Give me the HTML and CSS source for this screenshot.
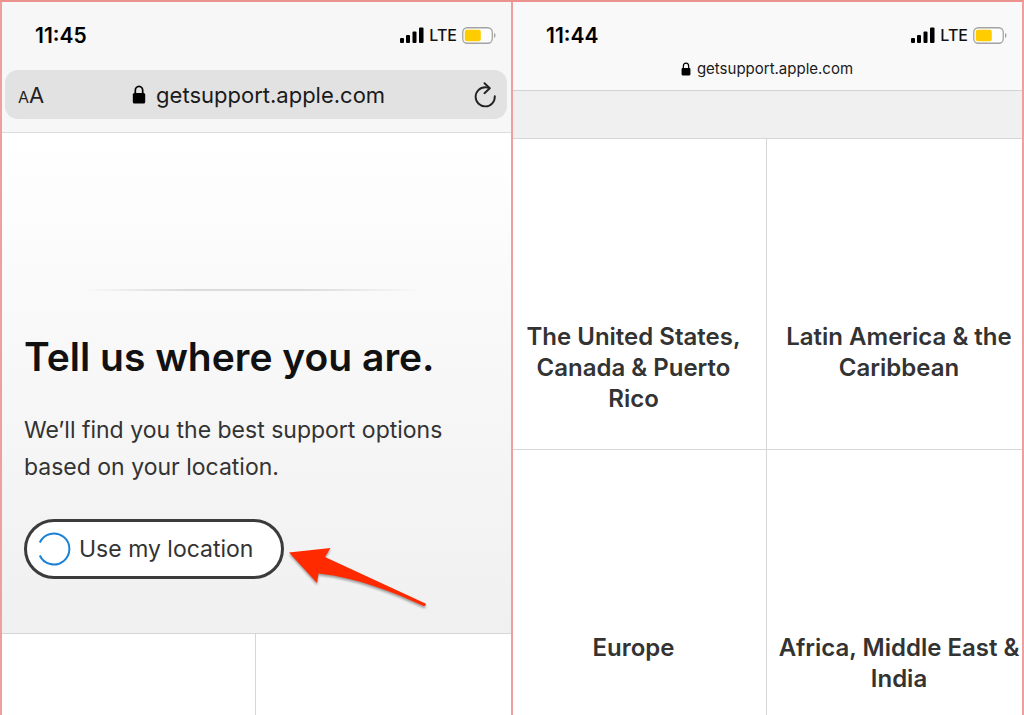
FILE: index.html
```html
<!DOCTYPE html>
<html lang="en">
<head>
<meta charset="utf-8">
<meta name="viewport" content="width=device-width, initial-scale=1">
<title>Get Support</title>
<link rel="stylesheet" href="styles.css">
</head>
<body>
<svg class="defs" aria-hidden="true">
  <symbol id="signal" viewBox="0 0 24 16">
    <rect x="0" y="11" width="4" height="5" rx="1"/>
    <rect x="6" y="8" width="4" height="8" rx="1"/>
    <rect x="12.500" y="4.500" width="4" height="11.500" rx="1"/>
    <rect x="19" y="0.500" width="4.500" height="15.500" rx="1"/>
  </symbol>
  <symbol id="battery" viewBox="0 0 34 17">
    <rect x="0.750" y="0.750" width="29.500" height="15.500" rx="4.500" fill="#fcfcfc" stroke="#a3a3a3" stroke-width="1.300"/>
    <rect x="2.800" y="2.800" width="16" height="11.400" rx="2" fill="#ffcc00"/>
    <path d="M32 6v5c2-.8 2-4.200 0-5z" fill="#a3a3a3"/>
  </symbol>
  <symbol id="lock" viewBox="0 0 14 19">
    <path d="M3.300 9V5.500a3.700 4.200 0 0 1 7.400 0V9" fill="none" stroke="currentColor" stroke-width="1.700"/>
    <rect x="0.800" y="8" width="12.400" height="10.500" rx="1.600"/>
  </symbol>
</svg>
<main class="screens">
  <section class="phone">
    <header class="browser">
      <div class="status">
        <time class="clock">11:45</time>
        <div class="indicators">
          <svg class="signal"><use href="#signal"/></svg>
          <span class="carrier">LTE</span>
          <svg class="battery"><use href="#battery"/></svg>
        </div>
      </div>
      <div class="address">
        <button class="text-size" type="button" aria-label="Text size"><span class="small-a">A</span>A</button>
        <div class="site"><svg class="lock"><use href="#lock"/></svg>getsupport.apple.com</div>
        <button class="reload" type="button" aria-label="Reload">
          <svg viewBox="0 0 24 26" width="24" height="26" fill="none" stroke="#222" stroke-width="1.900" stroke-linecap="round" stroke-linejoin="round">
            <path d="M21.800 14.300A9.600 9.600 0 1 1 12.200 5.200L16.300 6.200"/>
            <path d="M11.500 1.200l5.300 5-5.300 5"/>
          </svg>
        </button>
      </div>
    </header>
    <div class="hero">
      <div class="rule"></div>
      <h1 class="title">Tell us where you are.</h1>
      <p class="lead">We’ll find you the best support options based on your location.</p>
      <div class="action">
        <button class="locate" type="button">
          <svg class="spinner" viewBox="0 0 34 34" fill="none" stroke="#1b82d6" stroke-width="2"><path d="M2.800 10.500A15.500 15.500 0 1 1 2.800 23.500"/></svg>
          Use my location
        </button>
        <svg class="arrow" viewBox="0 0 140 62" fill="#ff2a00"><path d="M1 5.500L42.500 1 37 10 137.500 56.500C138.500 58 137 59.500 135 58.800 105 45 70 31 30.500 26.500L29 36Z"/></svg>
      </div>
    </div>
    <div class="grid grid-empty">
      <div class="region"></div>
      <div class="region"></div>
    </div>
  </section>
  <section class="phone">
    <header class="browser compact">
      <div class="status">
        <time class="clock">11:44</time>
        <div class="indicators">
          <svg class="signal"><use href="#signal"/></svg>
          <span class="carrier">LTE</span>
          <svg class="battery"><use href="#battery"/></svg>
        </div>
      </div>
      <div class="site"><svg class="lock"><use href="#lock"/></svg>getsupport.apple.com</div>
    </header>
    <div class="band"></div>
    <nav class="grid" aria-label="Regions">
      <a class="region" href="#us">The United States, Canada &amp; Puerto Rico</a>
      <a class="region" href="#latin-america">Latin America &amp; the Caribbean</a>
      <a class="region" href="#europe">Europe</a>
      <a class="region" href="#africa">Africa, Middle East &amp; India</a>
    </nav>
  </section>
</main>
</body>
</html>
```
FILE: styles.css
```css
* { box-sizing: border-box; }

body {
  margin: 0;
  font-family: Inter, "Liberation Sans", sans-serif;
  color: #333;
  background: #fff;
}

button {
  padding: 0;
  border: 0;
  background: none;
  font: inherit;
  color: inherit;
}

.defs { position: absolute; width: 0; height: 0; }

.screens {
  display: grid;
  grid-template-columns: 1fr 1fr;
  height: 100vh;
  overflow: hidden;
  border-top: 2px solid #eb928e;
  border-right: 2px solid #eda19e;
}

.phone {
  display: flex;
  flex-direction: column;
  min-width: 0;
  min-height: 0;
  border-left: 2px solid #eda19e;
}

.browser {
  flex: none;
  padding: 0 4px 13px 3px;
  background: #f7f7f7;
  border-bottom: 1px solid #dcdcdc;
}

.status {
  display: flex;
  align-items: center;
  justify-content: space-between;
  height: 68px;
  padding: 0 11px 2px 30px;
}

.clock { font-size: 21px; font-weight: 600; color: #000; }

.indicators { display: flex; align-items: center; gap: 5px; }
.signal { width: 24px; height: 16px; }
.carrier { font-size: 16px; font-weight: 500; color: #111; }
.battery { width: 34px; height: 17px; }

.address {
  display: flex;
  align-items: center;
  justify-content: space-between;
  height: 49px;
  padding: 0 10px 0 13px;
  border-radius: 13px;
  background: #e2e2e2;
}

.text-size { font-size: 22px; color: #222; }
.small-a { font-size: 16px; }
.reload { display: flex; }

.site {
  display: flex;
  align-items: center;
  justify-content: center;
  gap: 10px;
  font-size: 22px;
  color: #1a1a1a;
}

.lock { width: 14px; height: 19px; color: #000; }

.compact { padding-bottom: 11px; background: #f9f9f9; border-color: #d2d2d2; }
.compact .status { height: 56px; padding: 10px 11px 0 30px; }
.compact .site { gap: 6px; font-size: 15px; line-height: 21px; }
.compact .lock { width: 10px; height: 14px; }

.hero {
  flex: none;
  padding: 156px 22px 54px;
  background: linear-gradient(#fff, #fafafa 30%, #f0f0f0);
}

.rule {
  height: 2px;
  margin: 0 64px 0 56px;
  background: linear-gradient(90deg, transparent, #dcdcdc 30%, #dcdcdc 65%, transparent);
}

.title {
  margin: 40px 0 29px;
  font-size: 39px;
  font-weight: 600;
  line-height: 52px;
  color: #111;
  white-space: nowrap;
}

.lead { margin: 0 0 33px; font-size: 23px; line-height: 37px; }

.action { display: flex; align-items: flex-start; gap: 4px; }

.locate {
  display: flex;
  align-items: center;
  gap: 8px;
  height: 60px;
  padding: 0 28px 0 10px;
  border: 3px solid #3b3b3b;
  border-radius: 30px;
  background: #fff;
  font-size: 23px;
  white-space: nowrap;
}

.spinner { width: 34px; height: 34px; }

.arrow {
  flex: none;
  width: 140px;
  height: 62px;
  margin: 28px 0 -30px;
  filter: drop-shadow(0 2px 1px rgb(0 0 0 / 35%));
}

.band {
  flex: none;
  height: 48px;
  background: #f0f0f0;
  border-bottom: 1px solid #d6d6d6;
}

.grid {
  display: grid;
  grid-template-columns: 254fr 255fr;
  grid-auto-rows: 311px;
  flex: 1;
  min-height: 0;
  overflow: hidden;
}

.grid-empty { border-top: 1px solid #d6d6d6; }

.region {
  padding: 182px 0 0 9px;
  border-bottom: 1px solid #d6d6d6;
  font-size: 24px;
  font-weight: 600;
  line-height: 31px;
  text-align: center;
  text-decoration: none;
  color: #333;
}

.region:nth-child(odd) {
  padding: 182px 12px 0 0;
  border-right: 1px solid #d6d6d6;
}
```
